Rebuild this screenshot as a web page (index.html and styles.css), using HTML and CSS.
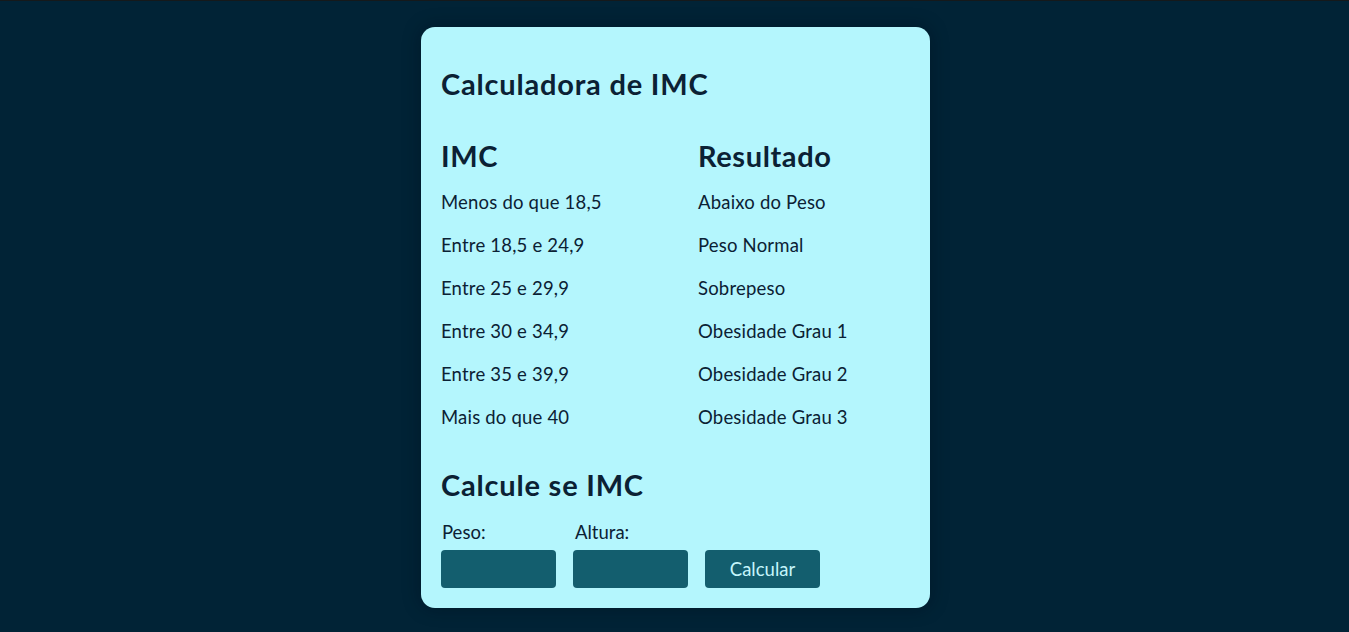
FILE: index.html
```html
<!DOCTYPE html>
<html lang="pt-BR">
<head>
<meta charset="utf-8">
<title>Calculadora de IMC</title>
<link rel="stylesheet" href="styles.css">
</head>
<body>
<main class="card">
  <h1 class="title">Calculadora de IMC</h1>
  <div class="table">
    <div class="th">IMC</div><div class="th">Resultado</div>
    <div class="td">Menos do que 18,5</div><div class="td">Abaixo do Peso</div>
    <div class="td">Entre 18,5 e 24,9</div><div class="td">Peso Normal</div>
    <div class="td">Entre 25 e 29,9</div><div class="td">Sobrepeso</div>
    <div class="td">Entre 30 e 34,9</div><div class="td">Obesidade Grau 1</div>
    <div class="td">Entre 35 e 39,9</div><div class="td">Obesidade Grau 2</div>
    <div class="td">Mais do que 40</div><div class="td">Obesidade Grau 3</div>
  </div>
  <h2 class="subtitle">Calcule se IMC</h2>
  <form class="form">
    <label class="field"><span class="label">Peso:</span><input class="input" type="text"></label>
    <label class="field"><span class="label">Altura:</span><input class="input" type="text"></label>
    <button class="btn" type="button">Calcular</button>
  </form>
</main>
</body>
</html>
```
FILE: styles.css
```css
* { box-sizing: border-box; }
html, body { height: 100%; }
body {
  margin: 0;
  padding-left: 2px;
  background: #012336;
  border-top: 1px solid #15191b;
  font-family: Lato, "Noto Sans", sans-serif;
  color: #0b2134;
  display: flex;
  justify-content: center;
  align-items: flex-start;
}
.card {
  margin-top: 26px;
  width: 509px;
  background: #b4f6fd;
  border-radius: 14px;
  padding: 21px 20px 20px;
  box-shadow: 0 0 18px rgba(0, 10, 20, 0.35);
}
.title, .subtitle {
  font-size: 29px;
  line-height: 36px;
  font-weight: 700;
  margin: 18px 0 0;
  letter-spacing: 0.8px;
}
.table {
  margin-top: 36px;
  display: grid;
  grid-template-columns: 257px 1fr;
}
.th {
  font-size: 29px;
  line-height: 36px;
  font-weight: 700;
  letter-spacing: 0.6px;
  margin-bottom: 7px;
}
.td {
  font-size: 18.5px;
  line-height: 43px;
  letter-spacing: 0.2px;
}
.subtitle { margin-top: 28px; }
.form {
  margin-top: 18px;
  display: flex;
  align-items: flex-end;
  gap: 17px;
}
.field {
  display: flex;
  flex-direction: column;
  gap: 7px;
}
.label {
  font-size: 18.5px;
  line-height: 22px;
  padding-left: 1px;
}
.field + .field .label { padding-left: 2px; }
.input {
  width: 115px;
  height: 38px;
  border: none;
  border-radius: 4px;
  background: #135e6e;
  font: inherit;
  color: #c5f5fb;
}
.btn {
  width: 115px;
  height: 38px;
  border: none;
  border-radius: 4px;
  background: #135e6e;
  color: #c5f5fb;
  font-family: inherit;
  font-size: 18.5px;
  padding: 0;
}
```
